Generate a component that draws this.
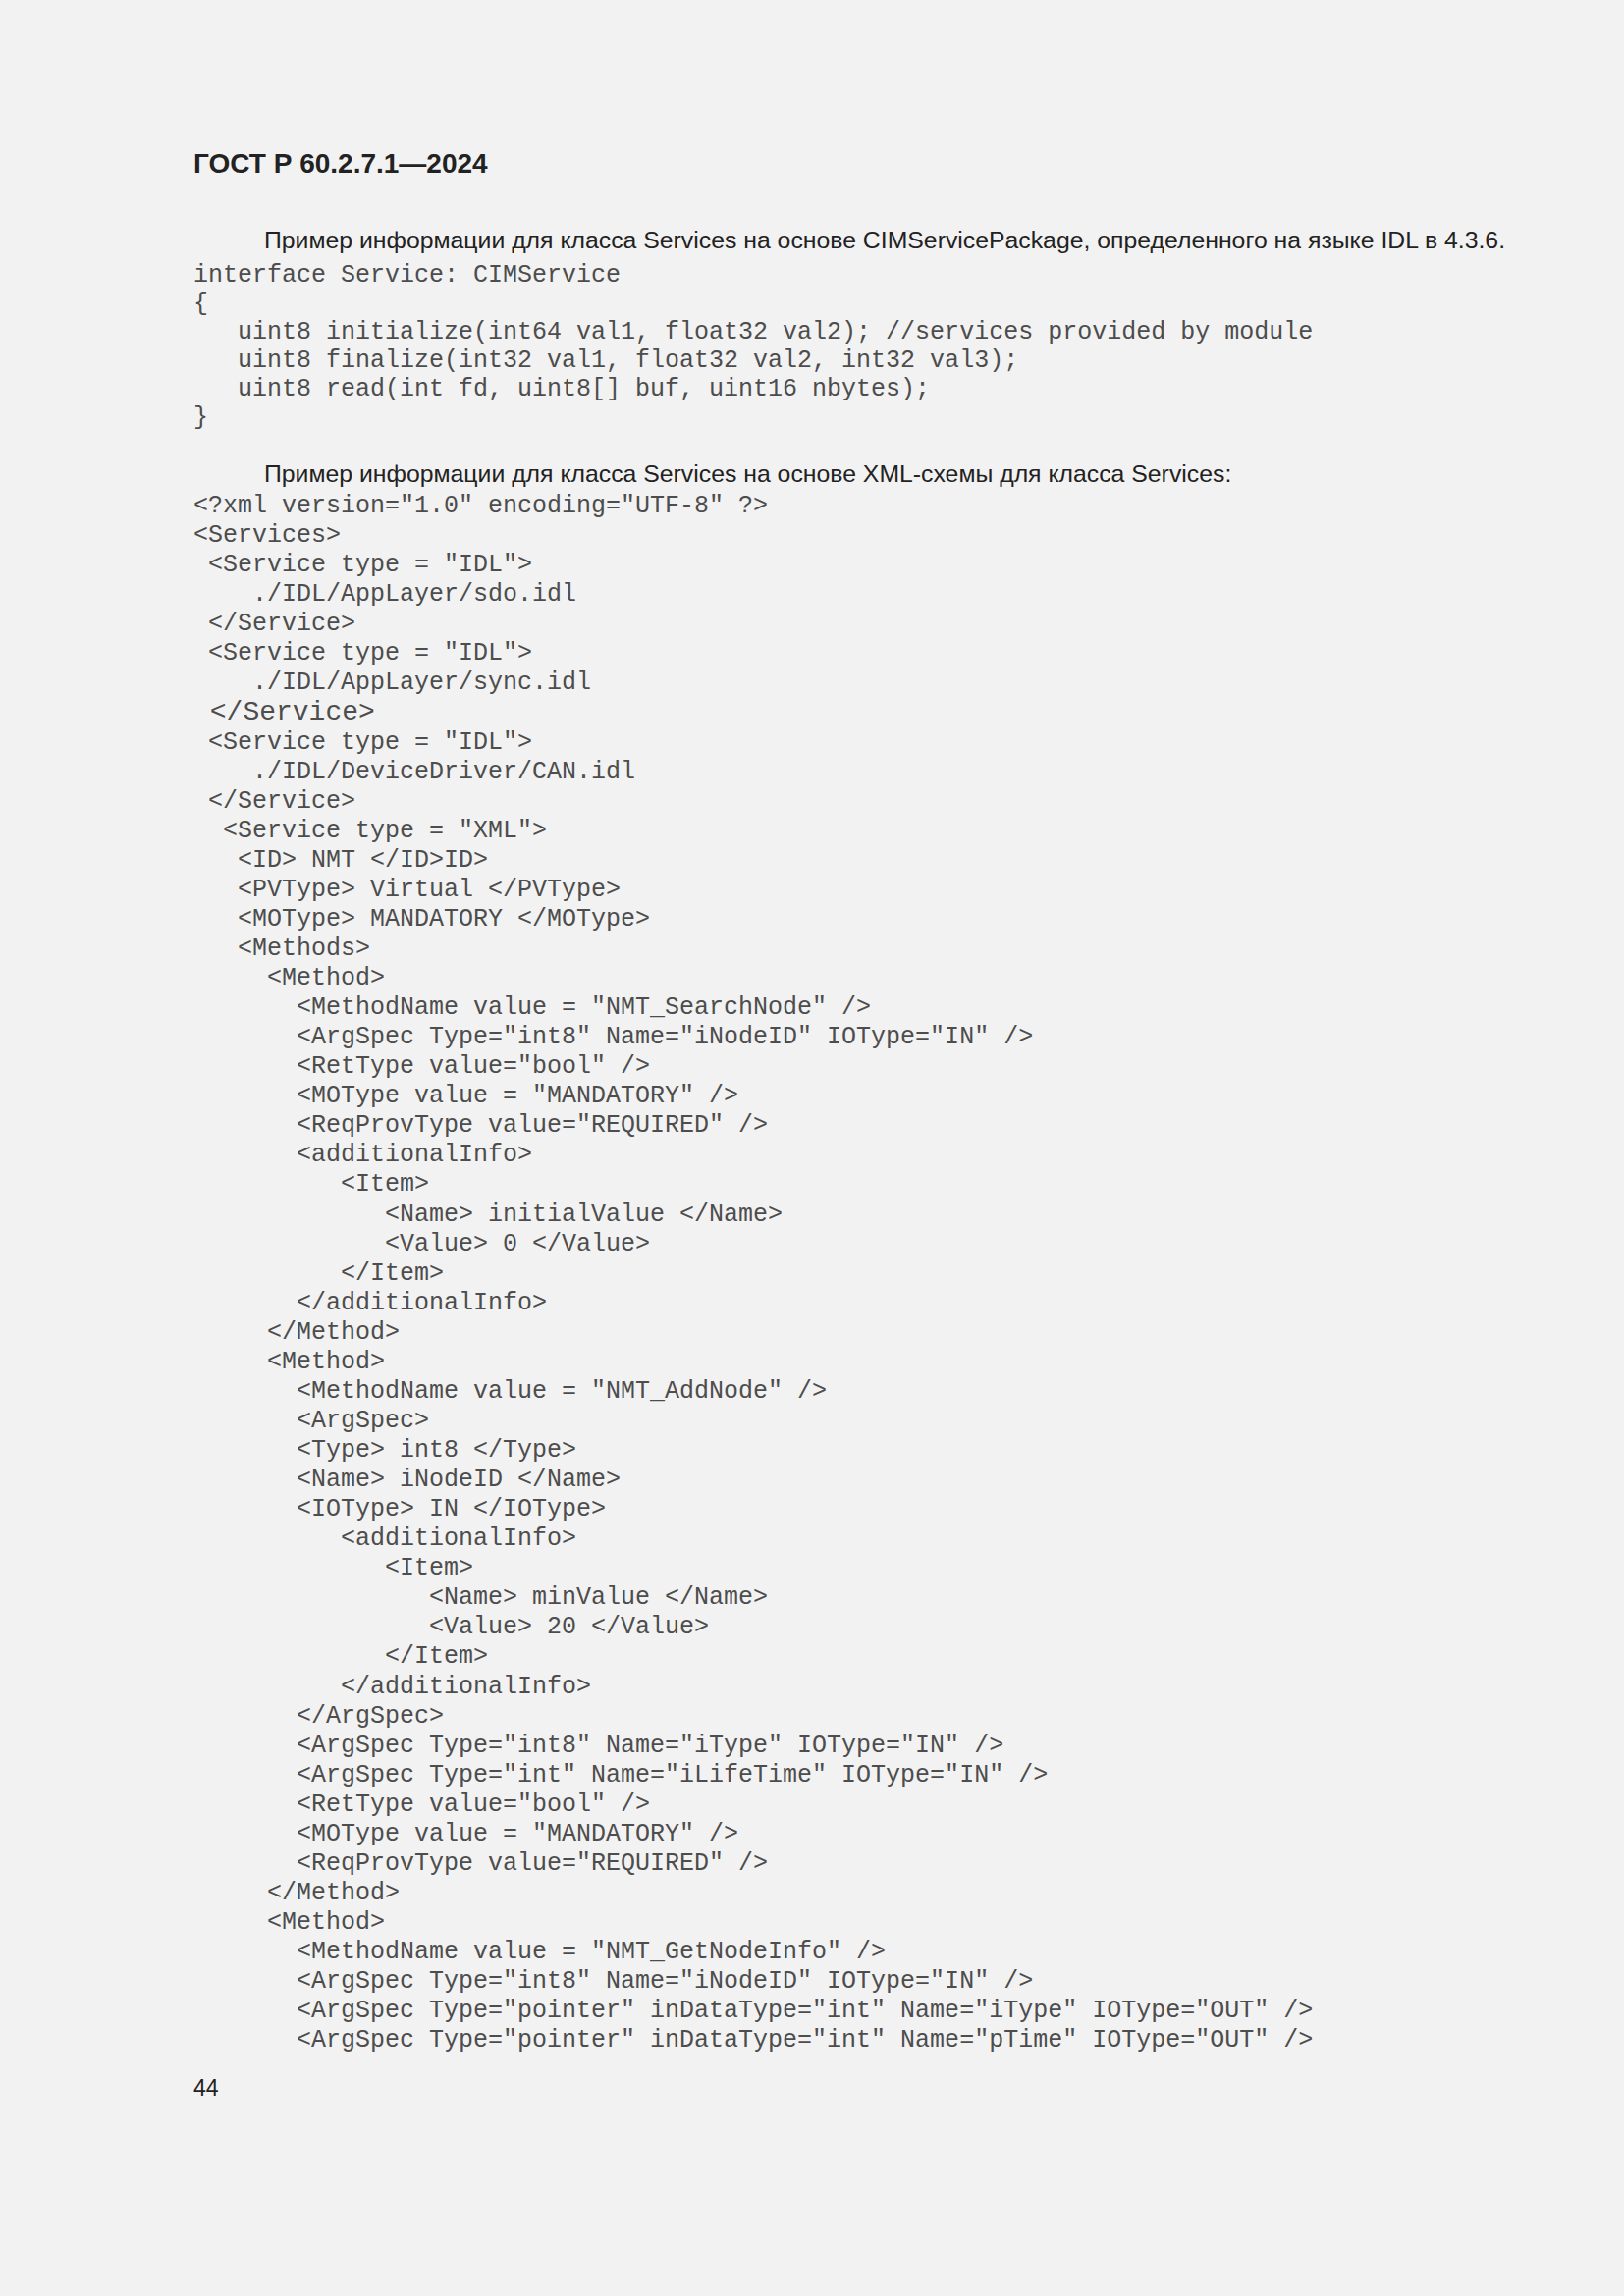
const idlLines = [
  "interface Service: CIMService",
  "{",
  "   uint8 initialize(int64 val1, float32 val2); //services provided by module",
  "   uint8 finalize(int32 val1, float32 val2, int32 val3);",
  "   uint8 read(int fd, uint8[] buf, uint16 nbytes);",
  "}",
];

// index 7 is the oversized "</Service>" line in the source document
const xmlLines = [
  '<?xml version="1.0" encoding="UTF-8" ?>',
  "<Services>",
  ' <Service type = "IDL">',
  "    ./IDL/AppLayer/sdo.idl",
  " </Service>",
  ' <Service type = "IDL">',
  "    ./IDL/AppLayer/sync.idl",
  " </Service>",
  ' <Service type = "IDL">',
  "    ./IDL/DeviceDriver/CAN.idl",
  " </Service>",
  '  <Service type = "XML">',
  "   <ID> NMT </ID>ID>",
  "   <PVType> Virtual </PVType>",
  "   <MOType> MANDATORY </MOType>",
  "   <Methods>",
  "     <Method>",
  '       <MethodName value = "NMT_SearchNode" />',
  '       <ArgSpec Type="int8" Name="iNodeID" IOType="IN" />',
  '       <RetType value="bool" />',
  '       <MOType value = "MANDATORY" />',
  '       <ReqProvType value="REQUIRED" />',
  "       <additionalInfo>",
  "          <Item>",
  "             <Name> initialValue </Name>",
  "             <Value> 0 </Value>",
  "          </Item>",
  "       </additionalInfo>",
  "     </Method>",
  "     <Method>",
  '       <MethodName value = "NMT_AddNode" />',
  "       <ArgSpec>",
  "       <Type> int8 </Type>",
  "       <Name> iNodeID </Name>",
  "       <IOType> IN </IOType>",
  "          <additionalInfo>",
  "             <Item>",
  "                <Name> minValue </Name>",
  "                <Value> 20 </Value>",
  "             </Item>",
  "          </additionalInfo>",
  "       </ArgSpec>",
  '       <ArgSpec Type="int8" Name="iType" IOType="IN" />',
  '       <ArgSpec Type="int" Name="iLifeTime" IOType="IN" />',
  '       <RetType value="bool" />',
  '       <MOType value = "MANDATORY" />',
  '       <ReqProvType value="REQUIRED" />',
  "     </Method>",
  "     <Method>",
  '       <MethodName value = "NMT_GetNodeInfo" />',
  '       <ArgSpec Type="int8" Name="iNodeID" IOType="IN" />',
  '       <ArgSpec Type="pointer" inDataType="int" Name="iType" IOType="OUT" />',
  '       <ArgSpec Type="pointer" inDataType="int" Name="pTime" IOType="OUT" />',
];

const sans = "font-['Liberation_Sans',Arial,sans-serif]";

export default function App() {
  return (
    <div className="min-h-[2339px] w-full bg-[#f2f2f2] pl-[197px] pt-[152px] text-[#222222]">
      <h1 className={`${sans} text-[28px] font-bold leading-[30px]`}>
        ГОСТ Р 60.2.7.1—2024
      </h1>

      <p className={`${sans} mt-[48px] pl-[72px] text-[24.8px] leading-[30px]`}>
        Пример информации для класса Services на основе CIMServicePackage, определенного на языке IDL в 4.3.6.
      </p>
      <div className="mt-[6px] font-['Liberation_Mono','Courier_New',monospace] text-[25px] leading-[29px] text-[#4d4d4d]">
        {idlLines.map((line, i) => (
          <div key={i} className="whitespace-pre">
            {line}
          </div>
        ))}
      </div>

      <p className={`${sans} mt-[28px] pl-[72px] text-[24.8px] leading-[30px]`}>
        Пример информации для класса Services на основе XML-схемы для класса Services:
      </p>
      <div className="mt-[3px] font-['Liberation_Mono','Courier_New',monospace] text-[25px] leading-[30.06px] text-[#4d4d4d]">
        {xmlLines.map((line, i) => (
          <div key={i} className={i === 7 ? "whitespace-pre text-[28px]" : "whitespace-pre"}>
            {line}
          </div>
        ))}
      </div>

      <div className={`${sans} mt-[18px] text-[23px] leading-[30px]`}>44</div>
    </div>
  );
}
